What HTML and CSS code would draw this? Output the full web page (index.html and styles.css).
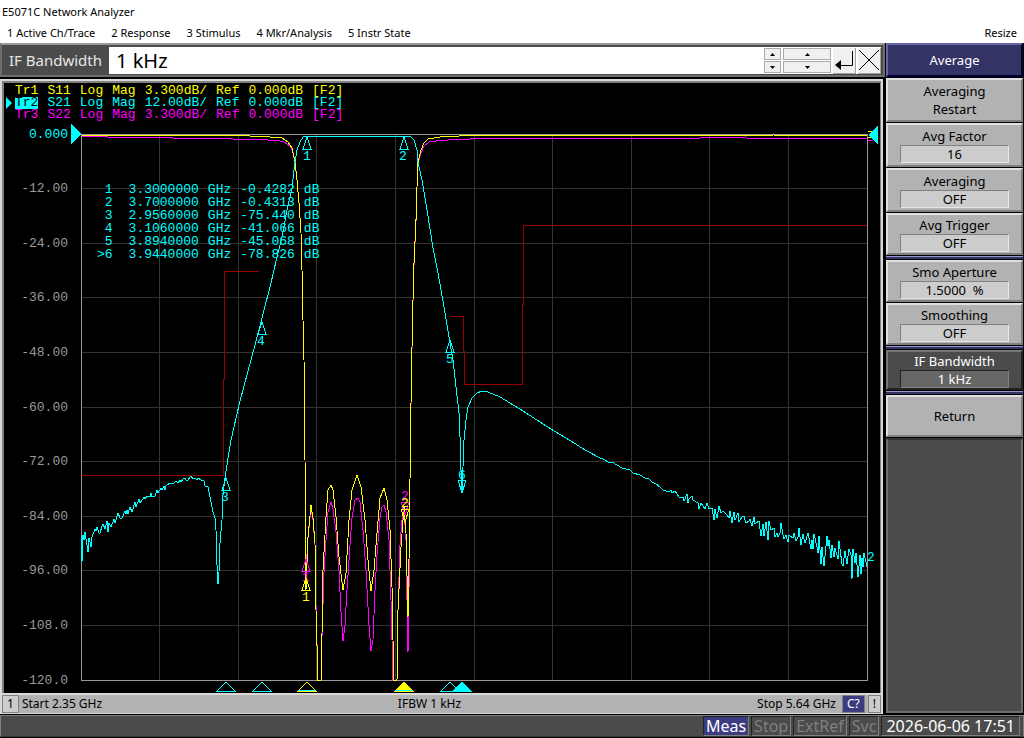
FILE: index.html
```html
<!DOCTYPE html>
<html lang="en">
<head>
    <meta charset="UTF-8">
    <meta name="viewport" content="width=device-width, initial-scale=1.0">
    <title>E5071C Network Analyzer</title>
    <link rel="stylesheet" href="styles.css">
</head>
<body>
    <header class="titlebar">E5071C Network Analyzer</header>

    <nav class="menubar">
        <button>1 Active Ch/Trace</button>
        <button>2 Response</button>
        <button>3 Stimulus</button>
        <button>4 Mkr/Analysis</button>
        <button>5 Instr State</button>
        <button class="resize">Resize</button>
    </nav>

    <main class="main">
        <div class="left">
            <div class="entry">
                <label for="ifbw">IF Bandwidth</label>
                <div class="entry-field">
                    <input type="text" id="ifbw" value="1 kHz">
                    <div class="spin">
                        <button aria-label="Step up"><svg width="5" height="3"><path d="M0 3L2.500 0L5 3z"/></svg></button>
                        <button aria-label="Step down"><svg width="5" height="3"><path d="M0 0L2.500 3L5 0z"/></svg></button>
                    </div>
                    <div class="spin wide">
                        <button aria-label="Large step up"><svg width="5" height="3"><path d="M0 3L2.500 0L5 3z"/></svg></button>
                        <button aria-label="Large step down"><svg width="5" height="3"><path d="M0 0L2.500 3L5 0z"/></svg></button>
                    </div>
                    <button class="tool" aria-label="Enter">
                        <svg width="20" height="22"><path d="M18.500 2V16.500H5" fill="none" stroke="#000"/><path d="M1 16L7 11V21z"/></svg>
                    </button>
                    <button class="tool" aria-label="Close">
                        <svg width="20" height="20"><path d="M0 0L20 20M20 0L0 20" fill="none" stroke="#000"/></svg>
                    </button>
                </div>
            </div>

            <section class="channel">
                <div class="screen">
                    <div class="traces">
                        <div class="trace tr1"><span>Tr1</span><span>S11</span><span>Log</span><span>Mag</span><span>3.300dB/</span><span>Ref</span><span>0.000dB</span><span>[F2]</span></div>
                        <div class="trace tr2"><span class="active">Tr2</span><span>S21</span><span>Log</span><span>Mag</span><span>12.00dB/</span><span>Ref</span><span>0.000dB</span><span>[F2]</span></div>
                        <div class="trace tr3"><span>Tr3</span><span>S22</span><span>Log</span><span>Mag</span><span>3.300dB/</span><span>Ref</span><span>0.000dB</span><span>[F2]</span></div>
                    </div>

                    <div class="plot">
                        <svg class="graph" viewBox="4 120 876 573" role="img" aria-label="S-parameter traces">
                            <defs>
                                <path id="mk" d="M0 0L4 12H-4z"/>
                                <path id="mk-active" d="M0 0L4 -13H-4z"/>
                                <path id="pos" d="M0 0L9 9H-9z"/>
                            </defs>

                            <!-- graticule -->
                            <g class="grid">
                                <path d="M159.500 134V680M238.500 134V680M316.500 134V680M395.500 134V680M474.500 134V680M552.500 134V680M631.500 134V680M709.500 134V680M788.500 134V680"/>
                                <path d="M81 188.500H867M81 243.500H867M81 297.500H867M81 352.500H867M81 407.500H867M81 461.500H867M81 516.500H867M81 570.500H867M81 625.500H867"/>
                            </g>
                            <path class="frame" d="M81.500 134.500H867.500V680.500H81.500z"/>

                            <g class="scale">
                                <text class="ref" x="68" y="138">0.000</text>
                                <text x="68" y="192">-12.00</text>
                                <text x="68" y="247">-24.00</text>
                                <text x="68" y="301">-36.00</text>
                                <text x="68" y="356">-48.00</text>
                                <text x="68" y="411">-60.00</text>
                                <text x="68" y="465">-72.00</text>
                                <text x="68" y="520">-84.00</text>
                                <text x="68" y="574">-96.00</text>
                                <text x="68" y="629">-108.0</text>
                                <text x="68" y="684">-120.0</text>
                            </g>

                            <!-- limit lines -->
                            <path class="limit" d="M81 475.500H223.500V380L224.500 379V271.500H259M451 316.500H463.500V351L464.500 352V384.500H522.500V305L523.500 304V225.500H867"/>

                            <!-- Tr3 -->
                            <polyline class="line s22" points="82,136 108,137 172,137 173,138 232,138 233,139 268,140 276,140 284,142 290,146 293,152 295,163 297,180 299,203 301,233 302,270 303,320 304,360 305,460 306,570 308,538 311,508 313,520 315,545 316,605 318,680 321,680 322,636 324,572 326,540 328,512 331,502 333,509 336,532 339,571 341,612 343,641 345,625 347,590 350,545 352,518 355,500 358,498 360,502 363,530 366,570 369,625 371,651 373,640 375,590 377,555 380,518 382,507 384,505 386,512 389,540 391,600 392,640 393,680 397,680 398,610 400,545 402,520 404,510 406,540 407,600 408,652 409,590 410,480 411,405 412,349 413,302 414,265 416,221 417,188 418,163 421,153 424,146 429,142 436,141 448,140 470,139 700,138 746,137 747,138 867,138"/>

                            <!-- Tr1 -->
                            <polyline class="line s11" points="82,135 210,135 249,135 250,136 270,137 282,138 288,142 292,148 295,162 297,180 299,203 301,233 302,270 303,320 304,360 305,460 306,590 308,537 311,505 313,518 315,543 316,610 318,680 321,680 322,633 323,570 326,517 328,490 331,485 333,490 336,517 339,557 343,590 346,573 349,520 352,490 357,475 361,487 365,520 368,560 371,591 374,570 377,533 380,498 384,488 387,500 390,530 392,587 393,640 394,680 397,680 398,610 401,547 404,507 406,533 408,617 409,560 410,480 411,403 412,347 413,300 414,263 416,220 417,187 418,162 421,150 424,143 428,139 440,137 459,136 460,135 710,135 711,136 715,135 735,136 739,135 770,136 773,135 830,136 835,135 867,136"/>

                            <!-- Tr2 -->
                            <polyline class="line s21" points="81,537 82,562 83,535 84,540 85,532 87,545 88,552 89,538 90,542 91,547 92,537 95,529 96,531 97,527 99,533 100,533 102,526 103,524 105,529 107,521 108,532 109,523 111,527 114,519 115,523 118,513 120,518 122,518 125,511 126,514 127,510 128,514 130,507 132,512 135,502 136,507 139,499 140,503 143,499 144,497 145,499 147,496 150,497 151,493 152,497 155,496 157,490 158,493 161,488 162,490 164,486 165,490 166,486 170,483 174,483 176,481 178,483 180,480 181,482 183,479 185,478 186,480 188,480 191,476 193,479 195,478 197,480 198,478 201,480 204,481 205,486 208,487 210,497 211,502 213,512 215,518 216,530 217,565 218,584 219,572 220,543 222,520 223,495 225,478 227,465 229,452 231,440 240,401 251,360 261,322 271,283 277,257 282,237 287,210 292,188 294,170 295,163 297,150 300,142 303,137 307,136 410,136 414,140 417,150 418,162 422,180 427,210 433,248 438,273 444,307 449,337 453,360 456,387 459,413 460,437 461,470 462,493 463,467 464,440 466,420 468,407 472,398 477,393 482,391 488,392 500,397 510,403 523,411 543,424 559,434 571,441 585,450 600,458 603,459 610,463 612,462 622,468 630,470 633,473 640,475 645,478 648,478 652,482 656,484 660,487 663,490 669,492 671,490 672,493 675,491 679,497 683,497 684,501 687,494 688,503 689,499 692,496 693,500 698,503 699,509 701,503 705,509 707,503 709,509 712,508 714,520 715,509 717,518 719,506 721,513 723,511 727,515 729,518 730,511 732,523 734,512 735,520 738,513 739,522 742,517 744,516 746,523 749,521 750,519 752,526 754,517 755,524 759,521 761,536 763,524 764,536 766,522 768,540 769,521 771,530 774,528 775,537 777,533 778,537 780,533 781,523 783,535 784,539 786,535 788,542 789,535 793,538 794,533 796,541 798,537 799,528 801,545 803,534 805,543 808,533 811,549 812,540 813,549 814,534 817,547 818,553 819,536 821,564 822,547 824,566 827,536 828,546 829,540 831,558 832,545 834,557 835,548 838,559 839,541 842,564 843,566 845,551 847,564 849,549 851,555 852,579 853,549 855,563 856,553 858,577 860,555 861,574 862,558 863,567 864,553 867,567"/>

                            <!-- markers on the traces -->
                            <g class="marker s22">
                                <use href="#mk" x="306" y="559"/><text x="306" y="581">1</text>
                                <use href="#mk-active" x="405" y="515"/><text x="405" y="500">2</text>
                            </g>
                            <g class="marker s11">
                                <use href="#mk" x="306" y="578"/><text x="306" y="601">1</text>
                                <use href="#mk-active" x="405" y="522"/><text x="405" y="507">2</text>
                            </g>
                            <g class="marker s21">
                                <use href="#mk" x="307" y="137"/><text x="307" y="160">1</text>
                                <use href="#mk" x="404" y="137"/><text x="403" y="160">2</text>
                                <use href="#mk" x="226" y="478"/><text x="225" y="501">3</text>
                                <use href="#mk" x="262" y="322"/><text x="261" y="345">4</text>
                                <use href="#mk" x="450" y="340"/><text x="450" y="363">5</text>
                                <use href="#mk-active" x="462" y="493"/><text x="462" y="479">6</text>
                                <text x="871" y="561">2</text>
                            </g>

                            <!-- marker positions on the stimulus axis -->
                            <g class="marker s21">
                                <use href="#pos" x="226" y="682"/>
                                <use href="#pos" x="262" y="682"/>
                                <use href="#pos" x="450" y="682"/>
                                <use href="#pos" x="462" y="682" class="fill-s21"/>
                            </g>
                            <g class="marker s11">
                                <use href="#pos" x="307" y="682"/>
                                <use href="#pos" x="404" y="682" class="fill-s11"/>
                            </g>
                            <path class="line s21" d="M298 690.500H316M395 690.500H413"/>

                            <path class="line s11" d="M868 131.500H872M868 137.500H872"/>
                            <path class="line s22" d="M868 140.500H873"/>
                            <path class="fill-s21" d="M71 124L81 134L71 144zM878 125L868 135L878 144z"/>
                        </svg>

                        <table class="readout">
                            <tr><td>1</td><td>3.3000000</td><td>GHz</td><td>-0.4282</td><td>dB</td></tr>
                            <tr><td>2</td><td>3.7000000</td><td>GHz</td><td>-0.4313</td><td>dB</td></tr>
                            <tr><td>3</td><td>2.9560000</td><td>GHz</td><td>-75.440</td><td>dB</td></tr>
                            <tr><td>4</td><td>3.1060000</td><td>GHz</td><td>-41.066</td><td>dB</td></tr>
                            <tr><td>5</td><td>3.8940000</td><td>GHz</td><td>-45.068</td><td>dB</td></tr>
                            <tr><td>&gt;6</td><td>3.9440000</td><td>GHz</td><td>-78.826</td><td>dB</td></tr>
                        </table>
                    </div>
                </div>

                <div class="channelbar">
                    <div class="start"><span class="box">1</span><span>Start 2.35 GHz</span></div>
                    <div class="ifbw">IFBW 1 kHz</div>
                    <div class="stop"><span>Stop 5.64 GHz</span><span class="box cor">C?</span><span class="box">!</span></div>
                </div>
            </section>
        </div>

        <aside class="softkeys">
            <h1>Average</h1>
            <button class="softkey">Averaging<br>Restart</button>
            <button class="softkey">Avg Factor<span class="value">16</span></button>
            <button class="softkey">Averaging<span class="value">OFF</span></button>
            <button class="softkey edge">Avg Trigger<span class="value">OFF</span></button>
            <div class="divider"></div>
            <button class="softkey edge">Smo Aperture<span class="value">1.5000&nbsp; %</span></button>
            <button class="softkey edge">Smoothing<span class="value">OFF</span></button>
            <div class="divider"></div>
            <button class="softkey single selected">IF Bandwidth<span class="value">1 kHz</span></button>
            <div class="divider"></div>
            <button class="softkey edge">Return</button>
            <div class="empty"></div>
        </aside>
    </main>

    <footer class="statusbar">
        <span class="state on">Meas</span>
        <span class="state">Stop</span>
        <span class="state">ExtRef</span>
        <span class="state">Svc</span>
        <span class="state clock">2026-06-06 17:51</span>
    </footer>
</body>
</html>
```

FILE: styles.css
```css
* {
    box-sizing: border-box;
}
body {
    margin: 0;
    min-height: 100vh;
    display: flex;
    flex-direction: column;
    background-color: #000;
    color: #000;
    font-family: "Noto Sans", sans-serif;
    font-size: 12px;
}
button {
    margin: 0;
    padding: 0;
    border: none;
    background: none;
    color: inherit;
    font: inherit;
}
.titlebar {
    height: 23px;
    padding-left: 2px;
    background-color: #fff;
    font-size: 11px;
    line-height: 24px;
}
.menubar {
    display: flex;
    gap: 16px;
    height: 20px;
    padding: 0 7px;
    background-color: #fff;
    font-size: 11px;
    line-height: 20px;
}
.menubar .resize {
    margin-left: auto;
}
.main {
    flex: 1;
    display: flex;
}
.left {
    flex: 1;
    min-width: 0;
    display: flex;
    flex-direction: column;
}

/* entry bar */
.entry {
    display: flex;
    height: 34px;
    margin-bottom: 2px;
    border: 2px solid #6e6e6e;
    border-top-color: #999;
    background-color: #4b4b4b;
    color: #e6e6e6;
    font-size: 15px;
}
.entry label {
    padding-left: 7px;
    width: 107px;
    line-height: 30px;
    white-space: nowrap;
}
.entry-field {
    flex: 1;
    display: flex;
    align-items: center;
    gap: 2px;
    margin: 2px 2px 1px 0;
    background-color: #fff;
}
.entry-field input {
    flex: 1;
    min-width: 0;
    padding: 0 7px;
    border: none;
    outline: none;
    font-family: "Noto Sans", sans-serif;
    font-size: 20px;
    line-height: 26px;
    height: 26px;
}
.spin {
    display: flex;
    flex-direction: column;
    gap: 1px;
    width: 17px;
}
.spin.wide {
    width: 48px;
}
.spin button {
    display: flex;
    align-items: center;
    justify-content: center;
    height: 12px;
    border: 1px solid #aaa;
    background-color: #f0f0f0;
}
.tool {
    display: flex;
    align-items: center;
    justify-content: center;
    width: 23px;
    height: 26px;
    border-right: 1px solid #a0a0a0;
    border-bottom: 1px solid #a0a0a0;
    background-color: #f0f0f0;
}

/* channel window */
.channel {
    flex: 1;
    display: flex;
    flex-direction: column;
    margin-right: 2px;
    border: 2px solid #d8d8d8;
    border-width: 2px 2px 1px 2px;
    background-color: #b2b2b2;
}
.screen {
    flex: 1;
    border: 2px solid #808080;
    border-width: 2px 1px 0 2px;
    background-color: #000;
    font-family: "Liberation Mono", monospace;
    font-size: 13px;
}
.traces {
    height: 37px;
    padding: 2px 0 0 11px;
}
.trace {
    display: flex;
    gap: 9px;
    height: 12px;
    line-height: 12px;
}
.tr1 {
    color: #ff0;
}
.tr2 {
    color: #0ff;
}
.tr3 {
    color: #f0f;
}
.active {
    position: relative;
    background-color: #0ff;
    color: #000;
}
.active::before {
    content: "";
    position: absolute;
    left: -9px;
    border: 6px solid transparent;
    border-left-color: #0ff;
    border-right-width: 0;
}
.plot {
    position: relative;
}
.graph {
    display: block;
    width: 100%;
    shape-rendering: crispEdges;
}
.grid {
    stroke: #333;
}
.frame {
    fill: none;
    stroke: #999;
}
.scale {
    fill: #999;
    text-anchor: end;
}
.scale .ref {
    fill: #0ff;
}
.limit {
    fill: none;
    stroke: #900;
}
.line, .marker {
    fill: none;
}
.s11 {
    stroke: #ff0;
}
.s21 {
    stroke: #0ff;
}
.s22 {
    stroke: #f0f;
}
.marker text {
    text-anchor: middle;
    stroke: none;
}
.marker.s11 text, .fill-s11 {
    fill: #ff0;
}
.marker.s21 text, .fill-s21 {
    fill: #0ff;
}
.marker.s22 text {
    fill: #f0f;
}
.readout {
    position: absolute;
    left: 93px;
    top: 63px;
    border-collapse: collapse;
    color: #0ff;
}
.readout td {
    height: 13px;
    padding: 0 9px 0 0;
    line-height: 13px;
    text-align: right;
}
.readout td:first-child {
    padding-right: 16px;
}
.channelbar {
    display: grid;
    grid-template-columns: 1fr auto 1fr;
    height: 20px;
    border-top: 2px solid #d8d8d8;
    line-height: 18px;
}
.start, .stop {
    display: flex;
    gap: 3px;
}
.ifbw {
    padding-right: 24px;
}
.stop {
    justify-content: flex-end;
}
.box {
    padding: 0 4px;
    border: 1px solid #808080;
    background-color: #ccc;
    line-height: 15px;
}
.cor {
    margin-left: 3px;
    background-color: #3c3c80;
    color: #fff;
}

/* softkey column */
.softkeys {
    display: flex;
    flex-direction: column;
    gap: 1px;
    width: 139px;
    padding: 0 1px 1px 1px;
    font-size: 13px;
}
.softkeys h1 {
    margin: 0;
    height: 34px;
    border: 2px solid #66a;
    border-right-color: #003;
    border-bottom-color: #003;
    background-color: #336;
    color: #fff;
    font-size: 13px;
    font-weight: normal;
    line-height: 31px;
    text-align: center;
}
.softkey {
    height: 44px;
    padding: 0 12px;
    border: 2px solid #e0e0e0;
    border-right-color: #808080;
    border-bottom-color: #808080;
    background-color: #b2b2b2;
    line-height: 18px;
}
.softkey.edge {
    height: 42px;
}
.softkey.single {
    height: 40px;
}
.value {
    display: block;
    height: 18px;
    border: 1px solid #808080;
    border-right-color: #e6e6e6;
    border-bottom-color: #e6e6e6;
    background-color: #ccc;
    line-height: 16px;
}
.selected {
    border-color: #777 #222 #222 #777;
    background-color: #4b4b4b;
    color: #fff;
}
.selected .value {
    border-color: #222 #808080 #808080 #222;
    background-color: #666;
}
.divider {
    height: 3px;
    border-top: 1px solid #99c;
    background-color: #336;
}
.empty {
    flex: 1;
    border: 2px solid #6e6e6e;
    border-top-color: #333;
    background-color: #4b4b4b;
}

/* instrument status */
.statusbar {
    display: flex;
    justify-content: flex-end;
    gap: 2px;
    height: 22px;
    margin: 1px 0;
    padding: 0 3px 0 0;
    border: 1px solid #808080;
    border-bottom-color: #333;
    background-color: #4b4b4b;
    color: #808080;
    font-size: 16px;
    line-height: 18px;
}
.state {
    padding: 0 2px;
    border: 1px solid #222;
    border-right-color: #808080;
    border-bottom-color: #808080;
}
.state.on {
    background-color: #3c3c80;
    color: #fff;
}
.state.clock {
    padding: 0 4px;
    color: #fff;
}
```
